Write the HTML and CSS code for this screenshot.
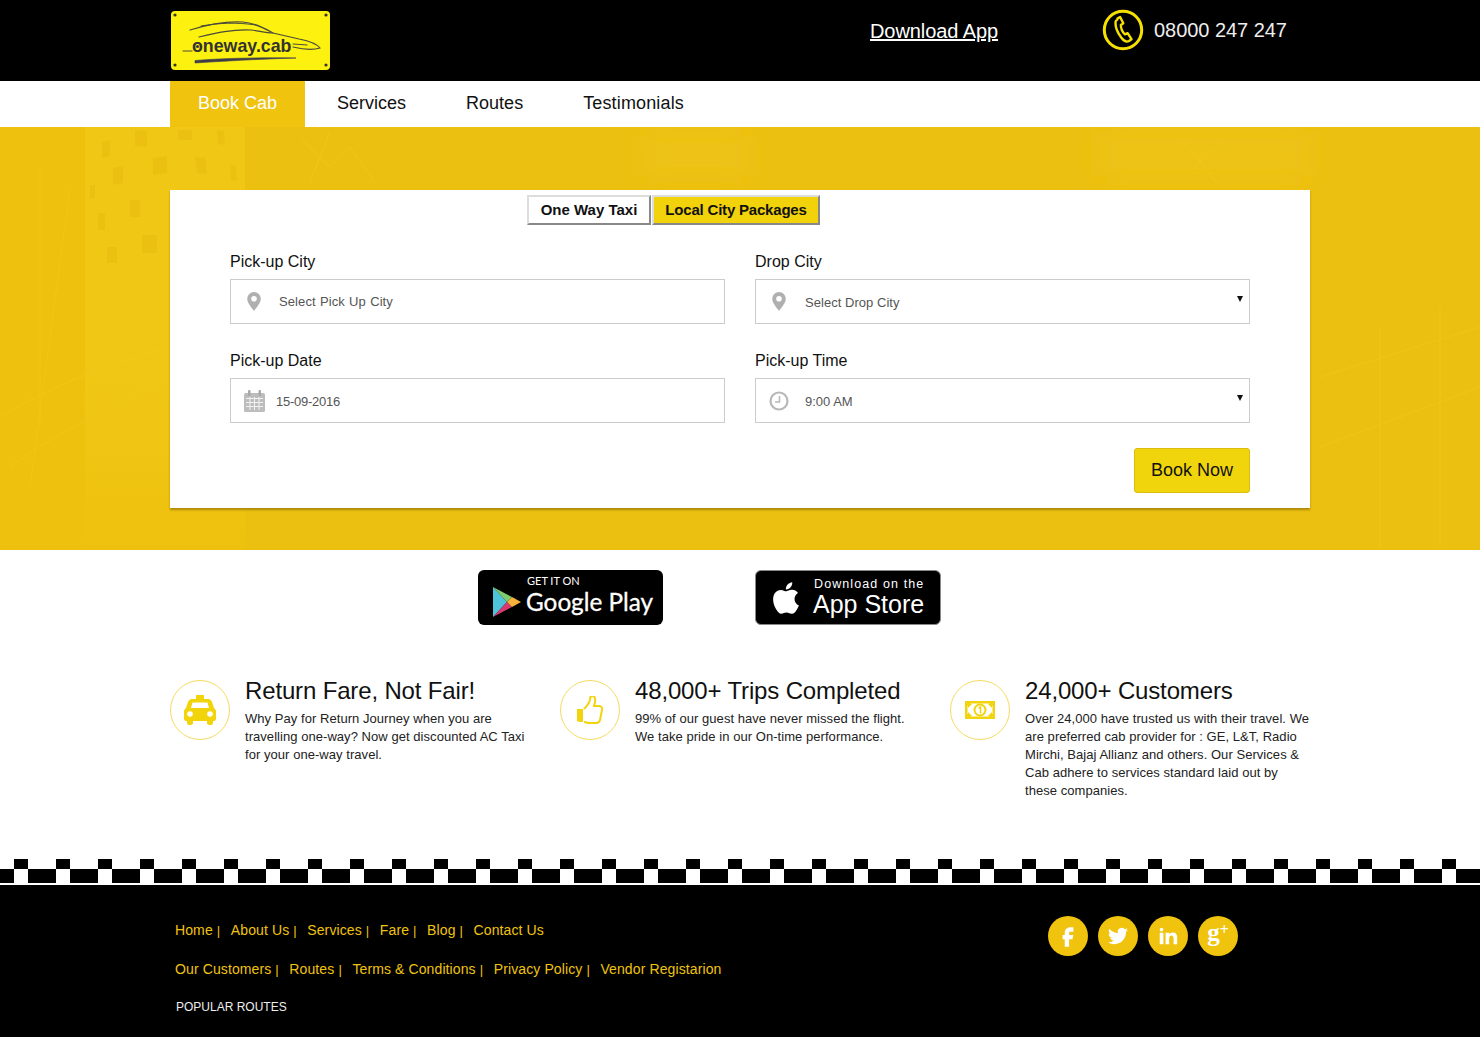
FILE: index.html
```html
<!DOCTYPE html>
<html lang="en">
<head>
  <meta charset="UTF-8"/>
  <meta name="viewport" content="width=device-width, initial-scale=1.0"/>
  <title>Oneway.cab</title>
  <link rel="stylesheet" href="styles.css">
</head>
<body>
<header class="top-bar">
  <div class="wrap top-inner">
    <a class="logo" href="#">
      <svg width="159" height="59" viewBox="0 0 159 59">
        <rect width="159" height="59" rx="4" fill="#fdf10f"/>
        <g fill="#333"><circle cx="4" cy="4" r="1.6"/><circle cx="155" cy="4" r="1.6"/><circle cx="4" cy="54" r="1.6"/><circle cx="155" cy="54" r="1.6"/></g>
        <g fill="none" stroke="#4a4a3c" stroke-linecap="round">
          <path d="M19 19C35 14 55 10 72 11 85 12 95 18 102 22L128 28C138 30 146 33 149 37 140 40 130 38 122 36" stroke-width="1.200"/>
          <path d="M28 26C45 22 62 18 80 19 88 20 96 22 102 22" stroke-width="1.200"/>
          <path d="M30 15C48 12 65 11 85 14" stroke-width="1"/>
          <path d="M122 33l14 1" stroke-width="1"/>
          <path d="M12 40h9" stroke-width="1"/>
        </g>
        <path d="M24 52L24 49.500C55 47 90 46.500 125 47 90 48 55 50 24 52z" fill="#3c3c4a" stroke="#3c3c4a" stroke-width=".6"/>
        <circle cx="26.500" cy="35.500" r="1.500" fill="#333"/>
        <text class="logo-text" x="21" y="41">oneway.cab</text>
      </svg>
    </a>
    <a class="download" href="#">Download App</a>
    <div class="phone">
      <svg class="phone-icon" width="42" height="42" viewBox="0 0 42 42">
        <circle cx="21" cy="21" r="18.700" fill="none" stroke="#f5e000" stroke-width="3"/>
        <path d="M15.500 9.500l2.600-1.500 3.200 6.300-2.400 1.700c-.4 2.800 1.600 7.400 4 9.400l2.700-1.200 3.900 6-2.500 1.800c-2 1.200-5 .2-7.600-3.200-3.800-5-6.200-11.300-5.900-15.800.1-1.300.9-2 2-2.500z" fill="none" stroke="#f5e000" stroke-width="2.400" stroke-linejoin="round"/>
      </svg>
      <span>08000 247 247</span>
    </div>
  </div>
</header>

<nav class="main-nav">
  <div class="wrap nav-inner">
    <a class="active" href="#">Book Cab</a>
    <a href="#">Services</a>
    <a href="#">Routes</a>
    <a href="#">Testimonials</a>
  </div>
</nav>

<section class="hero">
  <!-- faint city photo behind the booking card -->
  <svg class="hero-bg" width="1480" height="423" viewBox="0 0 1480 423">
    <defs>
      <linearGradient id="blockFade" x1="0" y1="0" x2="0" y2="1">
        <stop offset="0" stop-color="#f1c716"/>
        <stop offset=".55" stop-color="#f1c716"/>
        <stop offset="1" stop-color="#eec10e"/>
      </linearGradient>
      <filter id="soft" x="-20%" y="-50%" width="140%" height="200%"><feGaussianBlur stdDeviation="12"/></filter>
    </defs>
    <rect x="245" width="1235" height="423" fill="#ecc010"/>
    <rect x="85" width="160" height="423" fill="url(#blockFade)"/>
    <g fill="#eec315" filter="url(#soft)">
      <rect x="640" y="8" width="110" height="40"/>
      <rect x="1100" y="4" width="210" height="46"/>
    </g>
    <g fill="#ecc011">
      <path d="M135 3l12 1v16l-12-1zM102 15l8-2v16l-8 2zM153 31l14-2v17l-14 2zM113 41l10-2v17l-10 2zM195 30l10 1 2 16-10-1zM230 38l6 1 1 15-6-1z"/>
      <path d="M178 3h14v10h-14zM217 3l7 1 1 14-7-1zM90 58h5v13h-5zM130 73h10v17h-10zM98 86h7v17h-7zM142 108h15v18h-15zM107 120h10v16h-10z"/>
    </g>
    <g fill="none" stroke="#f2cb20" stroke-width="1" opacity=".5">
      <path d="M0 290c50-30 100-50 170-70M10 340c40-30 100-60 160-90M40 40v260M70 60l-40 300"/>
      <path d="M300 10l30 30 20-20 25 35M330 5l-20 50M1180 10l40 50M1220 15l-30 30"/>
      <path d="M1320 250l160-50M1320 320l160-60M1380 200v220M1440 180v240"/>
    </g>
  </svg>
  <div class="wrap booking">
    <div class="trip-tabs">
      <button class="trip-tab" type="button">One Way Taxi</button>
      <button class="trip-tab selected" type="button">Local City Packages</button>
    </div>
    <form class="book-form">
      <div class="form-field">
        <label>Pick-up City</label>
        <div class="field">
          <span class="field-icon">
            <svg width="14" height="19" viewBox="0 0 14 19"><path d="M7 0a6.800 6.800 0 0 0-6.800 6.800C.2 11 4.500 15.500 7 19c2.500-3.500 6.800-8 6.800-12.200A6.800 6.800 0 0 0 7 0zm0 9.600a2.800 2.800 0 1 1 0-5.600 2.800 2.800 0 0 1 0 5.600z" fill="#b0b0b0"/></svg>
          </span>
          <span class="field-text">Select Pick Up City</span>
        </div>
      </div>
      <div class="form-field">
        <label>Drop City</label>
        <div class="field">
          <span class="field-icon">
            <svg width="14" height="19" viewBox="0 0 14 19"><path d="M7 0a6.800 6.800 0 0 0-6.800 6.800C.2 11 4.500 15.500 7 19c2.500-3.500 6.800-8 6.800-12.200A6.800 6.800 0 0 0 7 0zm0 9.600a2.800 2.800 0 1 1 0-5.600 2.800 2.800 0 0 1 0 5.600z" fill="#b0b0b0"/></svg>
          </span>
          <span class="field-text wide lower">Select Drop City</span>
          <span class="arrow"></span>
        </div>
      </div>
      <div class="form-field">
        <label>Pick-up Date</label>
        <div class="field">
          <span class="field-icon">
            <svg width="21" height="22" viewBox="0 0 21 22"><rect y="3" width="21" height="19" rx="1.500" fill="#bdbdbd"/><rect x="4" y="0" width="2.500" height="6" rx="1" fill="#a8a8a8"/><rect x="14.500" y="0" width="2.500" height="6" rx="1" fill="#a8a8a8"/><path d="M2 8.500h17M2 12.500h17M2 16.500h17M6 7v13M10.500 7v13M15 7v13" stroke="#f2f2f2" stroke-width="1"/></svg>
          </span>
          <span class="field-text date">15-09-2016</span>
        </div>
      </div>
      <div class="form-field">
        <label>Pick-up Time</label>
        <div class="field">
          <span class="field-icon">
            <svg width="20" height="20" viewBox="0 0 20 20"><circle cx="10" cy="10" r="8.500" fill="none" stroke="#b8b8b8" stroke-width="2.200"/><path d="M10.500 5v6H6" fill="none" stroke="#b8b8b8" stroke-width="1.500"/></svg>
          </span>
          <span class="field-text wide">9:00 AM</span>
          <span class="arrow"></span>
        </div>
      </div>
      <div class="form-actions">
        <button class="book-btn" type="button">Book Now</button>
      </div>
    </form>
  </div>
</section>

<section class="apps">
  <a class="badge badge-play" href="#">
    <svg width="28" height="30" viewBox="0 0 28 30">
      <path d="M0 0l14 15L0 30z" fill="#4fc3d9"/>
      <path d="M0 0l19 10-5 5z" fill="#7ccb6f"/>
      <path d="M0 30l19-10-5-5z" fill="#d8396e"/>
      <path d="M19 10l9 5-9 5-5-5z" fill="#f7b23b"/>
    </svg>
    <span class="badge-copy">
      <span class="play-small">GET IT ON</span>
      <span class="play-big">Google Play</span>
    </span>
  </a>
  <a class="badge badge-apple" href="#">
    <svg width="38" height="38" viewBox="0 0 24 24"><path d="M18.710 19.500c-.83 1.240-1.710 2.450-3.050 2.470-1.340.03-1.770-.79-3.290-.79-1.530 0-2 .77-3.270.82-1.310.05-2.300-1.320-3.140-2.530C4.250 17 2.940 12.450 4.700 9.390c.87-1.520 2.430-2.480 4.120-2.510 1.280-.02 2.500.87 3.290.87.78 0 2.260-1.070 3.810-.91.65.03 2.470.26 3.640 1.980-.09.06-2.170 1.280-2.150 3.810.03 3.020 2.650 4.030 2.680 4.040-.03.07-.42 1.440-1.380 2.830M13 3.500c.73-.83 1.940-1.460 2.940-1.500.13 1.170-.34 2.350-1.040 3.190-.69.85-1.830 1.510-2.950 1.420-.15-1.150.41-2.350 1.050-3.110z" fill="#fff"/></svg>
    <span class="badge-copy">
      <span class="apple-small">Download on the</span>
      <span class="apple-big">App Store</span>
    </span>
  </a>
</section>

<section class="wrap features">
  <div class="feature">
    <div class="feature-icon">
      <svg width="32" height="30" viewBox="0 0 32 30">
        <path d="M12 0h8v4h-8z" fill="#f2d40d"/>
        <path d="M8 4h16c2 0 3 1 4 3l2 6c1.500 1 2 2 2 4v7c0 1-1 2-2 2H2c-1 0-2-1-2-2v-7c0-2 .5-3 2-4l2-6c1-2 2-3 4-3zm.5 3.500L7 13h18l-1.500-5.500z" fill="#f2d40d" fill-rule="evenodd"/>
        <path d="M3 26h6v2c0 1-1 2-2 2H5c-1 0-2-1-2-2zM23 26h6v2c0 1-1 2-2 2h-2c-1 0-2-1-2-2z" fill="#f2d40d"/>
        <circle cx="6" cy="19" r="2.800" fill="#fff"/><circle cx="26" cy="19" r="2.800" fill="#fff"/>
      </svg>
    </div>
    <div>
      <h3>Return Fare, Not Fair!</h3>
      <p>Why Pay for Return Journey when you are travelling one-way? Now get discounted AC Taxi for your one-way travel.</p>
    </div>
  </div>
  <div class="feature">
    <div class="feature-icon">
      <svg width="26" height="28" viewBox="0 0 26 28">
        <path d="M0 13h6v13H3l-3-1z" fill="#f2d40d"/>
        <path d="M7 13c3-3 6-6 6-10 0-2 1-3 2.500-3C18 0 18.500 3 18 6l-1 4h5c2.500 0 3.500 2 3 4l-2 10c-.5 2-2 3-4 3h-7c-2 0-3-1-5-1" fill="none" stroke="#f2d40d" stroke-width="2"/>
      </svg>
    </div>
    <div>
      <h3>48,000+ Trips Completed</h3>
      <p>99% of our guest have never missed the flight. We take pride in our On-time performance.</p>
    </div>
  </div>
  <div class="feature">
    <div class="feature-icon">
      <svg width="30" height="18" viewBox="0 0 30 18">
        <path d="M0 0h30v18H0zm2.500 5v8A4 4 0 0 1 6 15.500h18a4 4 0 0 1 3.500-2.500V5A4 4 0 0 1 24 2.500H6A4 4 0 0 1 2.500 5z" fill="#f2d40d" fill-rule="evenodd"/>
        <circle cx="15" cy="9" r="5.500" fill="none" stroke="#f2d40d" stroke-width="2"/>
        <path d="M13.500 7l2-1v6.500" fill="none" stroke="#f2d40d" stroke-width="1.500"/>
        <path d="M3 3h4L3 7zM27 3h-4l4 4zM3 15h4l-4-4zM27 15h-4l4-4z" fill="#f2d40d"/>
      </svg>
    </div>
    <div>
      <h3>24,000+ Customers</h3>
      <p>Over 24,000 have trusted us with their travel. We are preferred cab provider for : GE, L&amp;T, Radio Mirchi, Bajaj Allianz and others. Our Services &amp; Cab adhere to services standard laid out by these companies.</p>
    </div>
  </div>
</section>

<div class="checker">
  <div class="checker-top"></div>
  <div class="checker-bottom"></div>
</div>

<footer class="site-footer">
  <div class="wrap footer-inner">
    <div class="footer-links">
      <div class="link-row">
        <a href="#">Home</a><span>|</span>
        <a href="#">About Us</a><span>|</span>
        <a href="#">Services</a><span>|</span>
        <a href="#">Fare</a><span>|</span>
        <a href="#">Blog</a><span>|</span>
        <a href="#">Contact Us</a>
      </div>
      <div class="link-row">
        <a href="#">Our Customers</a><span>|</span>
        <a href="#">Routes</a><span>|</span>
        <a href="#">Terms &amp; Conditions</a><span>|</span>
        <a href="#">Privacy Policy</a><span>|</span>
        <a href="#">Vendor Registarion</a>
      </div>
      <div class="popular">POPULAR ROUTES</div>
    </div>
    <div class="social">
      <a href="#"><svg width="26" height="26" viewBox="0 0 24 24"><path d="M14 8h3V4h-3c-2.800 0-5 2.200-5 5v2H7v4h2v7h4v-7h3l1-4h-4V9c0-.6.4-1 1-1z" fill="#fff"/></svg></a>
      <a href="#"><svg width="20" height="20" viewBox="0 0 24 24"><path d="M23.953 4.570a10 10 0 0 1-2.825.775 4.958 4.958 0 0 0 2.163-2.723c-.951.555-2.005.959-3.127 1.184a4.920 4.920 0 0 0-8.384 4.482C7.690 8.095 4.067 6.130 1.640 3.162a4.822 4.822 0 0 0-.666 2.475c0 1.710.870 3.213 2.188 4.096a4.904 4.904 0 0 1-2.228-.616v.06a4.923 4.923 0 0 0 3.946 4.827 4.996 4.996 0 0 1-2.212.085 4.936 4.936 0 0 0 4.604 3.417 9.867 9.867 0 0 1-6.102 2.105c-.39 0-.779-.023-1.170-.067a13.995 13.995 0 0 0 7.557 2.209c9.053 0 13.998-7.496 13.998-13.985 0-.21 0-.42-.015-.63A9.935 9.935 0 0 0 24 4.590z" fill="#fff"/></svg></a>
      <a href="#"><svg width="22" height="22" viewBox="0 0 24 24"><path d="M6.940 5a2 2 0 1 1-4-.002 2 2 0 0 1 4 .002zM7 8.480H3V21h4V8.480zm6.320 0H9.340V21h3.940v-6.570c0-3.660 4.770-4 4.770 0V21H22v-7.930c0-6.170-7.060-5.940-8.720-2.910l.04-1.680z" fill="#fff"/></svg></a>
      <a class="gplus" href="#">g<sup>+</sup></a>
    </div>
  </div>
</footer>
</body>
</html>
```

FILE: styles.css
```css
* {
  box-sizing: border-box;
}

body {
  font-family: 'Liberation Sans', Arial, sans-serif;
  margin: 0;
  background: #fff;
  color: #111;
}

a {
  text-decoration: none;
  color: inherit;
}

.wrap {
  width: 1140px;
  margin: 0 auto;
}

/* top bar */
.top-bar {
  background: #000;
  height: 81px;
}

.top-inner {
  display: flex;
  height: 81px;
}

.logo {
  display: block;
  margin: 11px 0 0 1px;
  height: 59px;
}

.logo-text {
  font: bold 17.800px 'Liberation Sans', Arial, sans-serif;
  fill: #333;
}

.download {
  margin: 19px 0 0 540px;
  color: #fff;
  font-size: 20px;
  letter-spacing: -0.08px;
  line-height: 24px;
  height: 24px;
  text-decoration: underline;
}

.phone {
  display: flex;
  align-items: center;
  gap: 10px;
  height: 42px;
  margin: 9px 0 0 104px;
  color: #eee;
  font-size: 20px;
  letter-spacing: -0.05px;
}

/* nav */
.main-nav {
  background: #fff;
  height: 47px;
  border-bottom: 1px solid #f3dc8a;
}

.nav-inner {
  display: flex;
  height: 46px;
  font-size: 18px;
  line-height: 45px;
  color: #111;
}

.nav-inner a {
  margin-right: 60px;
}

.nav-inner a:last-child {
  letter-spacing: 0.15px;
}

.nav-inner a.active {
  background: #f0c30f;
  color: #fff;
  padding: 0 28px;
  margin-right: 32px;
}

/* hero with booking card */
.hero {
  position: relative;
  background: #eec10e;
  height: 423px;
  margin-top: -1px;
  padding-top: 63px;
  overflow: hidden;
}

.hero-bg {
  position: absolute;
  top: 0;
  left: 0;
}

.booking {
  position: relative;
  background: #fff;
  height: 318px;
  padding-top: 5px;
  box-shadow: 0 2px 2px rgba(90, 70, 0, 0.45);
}

.trip-tabs {
  display: flex;
  margin-left: 357px;
  gap: 1px;
  height: 30px;
}

.trip-tab {
  font: bold 15px 'Liberation Sans', Arial, sans-serif;
  color: #111;
  background: #fff;
  border: 2px solid;
  border-color: #ddd #888 #888 #ddd;
  width: 124px;
  padding: 0 0 2px;
  cursor: pointer;
}

.trip-tab.selected {
  width: 168px;
  background: #f1d20b;
  letter-spacing: -0.2px;
}

.book-form {
  display: grid;
  grid-template-columns: 495px 495px;
  column-gap: 30px;
  row-gap: 28px;
  padding: 28px 60px 0;
}

.form-field label {
  display: block;
  font-size: 16px;
  line-height: 18px;
  margin-bottom: 8px;
  color: #111;
}

.field {
  display: flex;
  align-items: center;
  height: 45px;
  border: 1px solid #ccc;
  background: #fff;
}

.field-icon {
  display: flex;
  justify-content: center;
  align-items: center;
  width: 46px;
  flex-shrink: 0;
}

.field-text {
  margin-left: 2px;
  font-size: 13px;
  color: #555;
  padding-bottom: 1px;
  word-spacing: 0.5px;
  letter-spacing: 0.1px;
}

.field-text.wide {
  margin-left: 3px;
  letter-spacing: 0;
  word-spacing: 0;
  padding: 2px 0 0;
}

.field-text.lower {
  padding-top: 1px;
  letter-spacing: 0.04px;
}

.field-text.date {
  margin-left: -1px;
  letter-spacing: -0.25px;
  word-spacing: 0;
  padding: 2px 0 0;
}

.arrow {
  margin: 0 6px 5px auto;
  border-left: 3.500px solid transparent;
  border-right: 3.500px solid transparent;
  border-top: 6px solid #111;
}

.form-actions {
  grid-column: 1 / 3;
  display: flex;
  justify-content: flex-end;
  margin-top: -3px;
}

.book-btn {
  width: 116px;
  height: 45px;
  font: 18px 'Liberation Sans', Arial, sans-serif;
  color: #111;
  background: #f1d50c;
  border: 1px solid #dcbc0c;
  border-radius: 3px;
  cursor: pointer;
}

/* store badges */
.apps {
  display: flex;
  height: 130px;
  padding: 20px 0 0 478px;
  gap: 92px;
}

.badge {
  display: flex;
  align-items: center;
  height: 55px;
  background: #000;
  color: #fff;
  border-radius: 6px;
}

.badge-copy {
  display: flex;
  flex-direction: column;
}

.badge-play {
  width: 185px;
  padding-left: 15px;
  gap: 5px;
}

.badge-play svg {
  margin-top: 8px;
}

.badge-play .badge-copy {
  padding-bottom: 5px;
}

.play-small {
  font: 11px Lato, sans-serif;
  line-height: 13px;
  margin-left: 1px;
}

.play-big {
  font: 24.300px Lato, sans-serif;
  line-height: 29px;
  -webkit-text-stroke: 0.3px #fff;
}

.badge-apple {
  width: 186px;
  border: 1px solid #888;
  padding-left: 11px;
  gap: 8px;
}

.badge-apple .badge-copy {
  padding-bottom: 2px;
}

.apple-small {
  font-size: 12.500px;
  line-height: 15px;
  letter-spacing: 1.100px;
  margin-left: 1px;
}

.apple-big {
  font-size: 25px;
  line-height: 24px;
}

/* three feature blurbs */
.features {
  display: flex;
  gap: 30px;
  height: 179px;
}

.feature {
  display: flex;
  width: 360px;
  gap: 15px;
}

.feature-icon {
  display: flex;
  justify-content: center;
  align-items: center;
  width: 60px;
  height: 60px;
  flex-shrink: 0;
  border: 1px solid #f5dc60;
  border-radius: 50%;
}

.feature h3 {
  margin: 0;
  font-size: 24px;
  font-weight: normal;
  line-height: 22px;
  letter-spacing: -0.15px;
  color: #111;
}

.feature p {
  margin: 8px 0 0;
  font-size: 13px;
  line-height: 18px;
  letter-spacing: 0.05px;
  color: #222;
  width: 285px;
}

/* taxi checker strip */
.checker {
  height: 26px;
}

.checker-top {
  height: 10px;
  background: linear-gradient(90deg, transparent 14px, #000 14px, #000 28px, transparent 28px) 0 0 / 42px 10px;
}

.checker-bottom {
  height: 14px;
  background: linear-gradient(90deg, #000 14px, #fff 14px, #fff 28px, #000 28px) 0 0 / 42px 14px;
}

/* footer */
.site-footer {
  background: #000;
  height: 152px;
  padding-top: 26px;
}

.footer-inner {
  display: flex;
  justify-content: space-between;
  padding: 0 72px 0 5px;
}

.link-row {
  display: flex;
  height: 39px;
  line-height: 39px;
  font-size: 14px;
  letter-spacing: 0.11px;
  color: #f0c30f;
}

.link-row span {
  margin: 0 10.500px 0 4px;
  font-size: 13px;
}

.popular {
  margin: 11px 0 0 1px;
  font-size: 12px;
  line-height: 14px;
  color: #eee;
}

.social {
  display: flex;
  gap: 10px;
  margin-top: 5px;
}

.social a {
  display: flex;
  justify-content: center;
  align-items: center;
  width: 40px;
  height: 40px;
  border-radius: 50%;
  background: #f0c30f;
}

.gplus {
  font: bold 25px 'Liberation Serif', serif;
  color: #fff;
  padding-bottom: 6px;
}

.gplus sup {
  font-size: 16px;
  line-height: 0;
  margin-top: -6px;
}
```
